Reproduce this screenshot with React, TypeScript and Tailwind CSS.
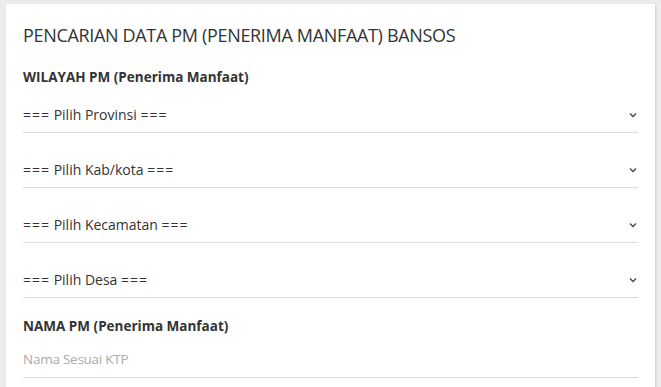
import React from "react";

function Chevron() {
  return (
    <svg width="8" height="6" viewBox="0 0 8 6" className="shrink-0">
      <path d="M1 1.5 L4 4.5 L7 1.5" fill="none" stroke="#444" strokeWidth="1.3" />
    </svg>
  );
}

function Select({ label }: { label: string }) {
  return (
    <div className="flex h-[36px] items-center justify-between border-b border-[#dcdcdc] pr-[1px] text-[14px] text-[#333]">
      <span>
        <span className="tracking-[1px]">===</span> {label} <span className="tracking-[1px]">===</span>
      </span>
      <Chevron />
    </div>
  );
}

export default function App() {
  return (
    <div
      className="h-[387px] w-[661px] overflow-hidden bg-[#ececec] pl-[6px] pr-[6px] pt-[4px]"
      style={{ fontFamily: '"Open Sans", "Noto Sans", sans-serif' }}
    >
      <div className="h-[400px] bg-white px-[17px] pt-[18px] shadow-[1px_1px_2px_rgba(0,0,0,0.12)]">
        <div className="h-[26px] text-[18px] leading-[26px] tracking-[-0.33px] text-[#333]">
          PENCARIAN DATA PM (PENERIMA MANFAAT) BANSOS
        </div>
        <div className="mt-[19px] h-[20px] text-[13.5px] font-bold leading-[20px] text-[#333]">
          WILAYAH PM (Penerima Manfaat)
        </div>
        <div className="mt-[10px] flex flex-col gap-[19px]">
          <Select label="Pilih Provinsi" />
          <Select label="Pilih Kab/kota" />
          <Select label="Pilih Kecamatan" />
          <Select label="Pilih Desa" />
        </div>
        <div className="mt-[18px] h-[20px] text-[13.5px] font-bold leading-[20px] text-[#333]">
          NAMA PM (Penerima Manfaat)
        </div>
        <div className="mt-[5px] flex h-[37px] items-center border-b border-[#dcdcdc] text-[13.5px] tracking-[-0.25px] text-[#aaa]">
          Nama Sesuai KTP
        </div>
      </div>
    </div>
  );
}
